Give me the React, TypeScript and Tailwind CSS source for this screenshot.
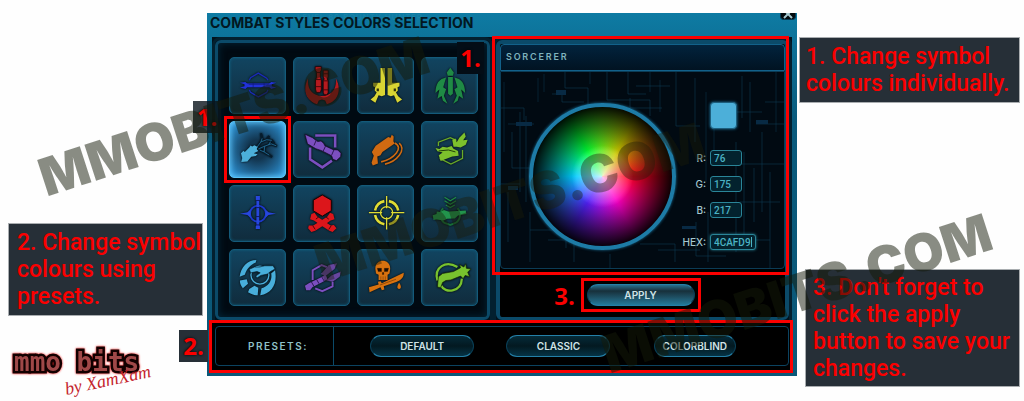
import React, { useState } from 'react';

const P = '#7c4fc0';
const G = '#1f8a45';

const styles = [
    {
        name: 'Sentinel', box: '12 21 171 171', art: (
            <g fill="#2232d8" stroke="#2232d8">
                <path d="M72 90 L76 82 L100 68 L126 84 L130 90 M72 120 L76 128 L100 142 L126 128 L130 120" fill="none" stroke="#1a2bb8" strokeWidth="4" />
                <path d="M62 100 H138 V112 H62 Z" stroke="none" />
                <path d="M43 98 L60 96 L66 101 V111 L60 117 L43 113 L57 109 V103 Z M156 98 L140 96 L134 101 V111 L140 117 L156 113 L142 109 V103 Z" stroke="none" />
                <path d="M70 103 H132 M84 98 V113 M118 98 V113" stroke="#101a70" strokeWidth="2" />
            </g>
        ),
    },
    {
        name: 'Marauder', box: '204 21 171 171', art: (
            <g fill="#b51a1f">
                <path d="M248 84 C230 116 240 154 276 165 L281 153 L291 150 L301 153 L306 165 C344 154 352 116 334 84 C338 116 322 139 291 139 C260 139 244 116 248 84 Z" />
                <path d="M270 48 H289 V58 L286 64 V82 L289 88 V118 L286 128 H273 L271 118 V88 L274 82 V64 L270 58 Z" stroke="#140203" strokeWidth="2" />
                <path d="M295 59 H310 V80 L307 86 L310 92 V128 L307 135 H298 L295 128 V92 L298 86 L295 80 Z" stroke="#140203" strokeWidth="2" />
                <path d="M273 66 H287 M272 88 H289 M272 110 H289 M295 70 H310 M295 92 H310 M295 120 H310" stroke="#4a0609" strokeWidth="3" />
            </g>
        ),
    },
    {
        name: 'Gunslinger', box: '6 21 171 171', art: (
            <g fill="#d8d433">
                <path d="M76 52 H90 V136 L80 140 L70 137 L60 160 L45 150 L57 140 L64 128 L58 122 L59 112 L53 109 V98 H76 Z" />
                <path d="M112 52 H98 V136 L108 140 L118 137 L128 160 L143 150 L131 140 L124 128 L130 122 L129 112 L135 109 V98 H112 Z" />
                <path d="M64 116 h7 v8 h-7 z M117 116 h7 v8 h-7 z" fill="#30300a" />
            </g>
        ),
    },
    {
        name: 'Powertech', box: '198 21 171 171', art: (
            <g fill={G}>
                <path d="M286 51 L297 66 L294 76 H278 L275 66 Z M279 80 H294 V132 L286 138 L279 132 Z" />
                <path d="M273 82 C252 86 240 100 240 130 L252 119 L246 148 L259 139 L263 154 L277 163 L266 138 L273 118 L264 112 Z" />
                <path d="M299 82 C320 86 332 100 332 130 L320 119 L326 148 L313 139 L309 154 L295 163 L306 138 L299 118 L308 112 Z" />
            </g>
        ),
    },
    {
        name: 'Sorcerer', box: '12 213 171 171', art: (
            <g>
                <path d="M96 291 L108 275 L112 264 L108 248 M108 275 L126 268 L134 256 M100 297 L120 288 L140 281 L158 288 M120 288 L118 306 L134 316 L143 322 M126 268 L142 270 L150 280 M118 306 L104 300 M132 284 L138 274" fill="none" stroke="#061c2c" strokeWidth="7" />
                <path d="M96 291 L108 275 L112 264 M108 275 L126 268 M100 297 L120 288 L140 281 L156 287 M120 288 L118 306 L134 316 M126 268 L142 270 M118 306 L104 300 M132 284 L138 274" fill="none" stroke="#2c86b8" strokeWidth="2" />
                <path d="M47 337 L50 325 L46 310 L54 302 L58 306 L72 292 L76 286 L81 289 L88 285 L98 291 L95 297 L100 303 L86 310 L98 313 L92 319 L78 321 L66 336 Z" fill="#4cafd9" />
            </g>
        ),
    },
    {
        name: 'Shadow', box: '204 213 171 171', art: (
            <g>
                <path d="M270 255 H332 V292 M254 292 V329 L292 354 L322 333" fill="none" stroke={P} strokeWidth="8" />
                <path d="M238 251 L262 262 L272 270 L278 274 L288 272 L296 279 L300 287 L326 299 L340 300 L350 310 L349 321 L336 333 L325 329 L321 318 L290 302 L272 296 L246 281 Z" fill={P} stroke="#140a26" strokeWidth="2" />
                <path d="M273 270 L266 286 M302 288 L295 303 M328 300 L321 316" stroke="#2b1650" strokeWidth="3" />
            </g>
        ),
    },
    {
        name: 'Operative', box: '6 213 171 171', art: (
            <g>
                <path d="M120 278 C150 292 118 328 78 337 M134 279 C158 300 126 336 90 344" fill="none" stroke="#d06a12" strokeWidth="5" />
                <path d="M61 287 L100 260 L107 262 L111 253 L117 258 L116 273 L120 280 L82 306 L76 316 L66 320 L68 342 L52 348 L48 340 L55 318 L49 306 Z" fill="#d06a12" />
            </g>
        ),
    },
    {
        name: 'Mercenary', box: '198 213 171 171', art: (
            <g>
                <path d="M249 288 V276 L286 262 L305 270 M253 326 L288 344 L324 326 V300" fill="none" stroke="#6aab28" strokeWidth="4" />
                <path d="M240 294 L252 297 L262 290 L276 292 L290 288 L296 296 L310 303 L312 318 L292 320 L256 334 L250 316 L262 308 L246 304 Z" fill="#7cc02c" />
                <path d="M296 290 L292 268 L302 264 L306 276 L314 262 L330 246 L334 258 L326 270 L340 268 L334 284 L318 292 L306 290 Z" fill="#7cc02c" />
                <path d="M250 303 L280 300 L302 306" stroke="#1f3a08" strokeWidth="3" fill="none" />
            </g>
        ),
    },
    {
        name: 'Guardian', box: '12 17 171 171', art: (
            <g fill="#2747dd">
                <circle cx="99" cy="103" r="25" fill="none" stroke="#1c38c8" strokeWidth="6" />
                <path d="M43 103 L66 99 L76 90 V116 L66 107 Z M155 103 L132 99 L122 90 V116 L132 107 Z" />
                <path d="M92 48 H105 V60 L103 64 V138 L105 142 V151 H92 V142 L94 138 V64 L92 60 Z" />
                <path d="M92 62 H106 M92 84 H106 M92 112 H106 M92 138 H106" stroke="#0c1a66" strokeWidth="3" />
            </g>
        ),
    },
    {
        name: 'Juggernaut', box: '204 17 171 171', art: (
            <g fill="#dc161b">
                <path d="M258 104 L268 100 L276 112 L318 140 L328 138 L336 148 L324 160 L314 156 L286 138 L266 124 L254 120 Z" />
                <path d="M326 104 L316 100 L308 112 L264 140 L250 140 L248 148 L258 160 L270 156 L298 138 L318 124 L330 120 Z" />
                <path d="M292 45 L320 61 V94 L292 111 L264 94 V61 Z" stroke="#160304" strokeWidth="3" />
                <path d="M272 120 L282 112 M302 112 L312 120 M262 140 L270 152 M320 140 L312 152" stroke="#4d0305" strokeWidth="3" />
            </g>
        ),
    },
    {
        name: 'Sniper', box: '6 17 171 171', art: (
            <g fill="none" stroke="#e0dc33">
                <path d="M102 64 A37 37 0 0 1 131 93 M131 107 A37 37 0 0 1 102 136 M88 136 A37 37 0 0 1 59 107 M59 93 A37 37 0 0 1 88 64" strokeWidth="8" />
                <circle cx="95" cy="100" r="19" strokeWidth="4" />
                <path d="M95 48 V86 M95 114 V152 M40 100 H81 M109 100 H150" strokeWidth="4" />
            </g>
        ),
    },
    {
        name: 'Commando', box: '198 17 171 171', art: (
            <g>
                <path d="M268 52 L286 63 L304 52 M268 63 L286 74 L304 63 M272 76 L286 84 L300 76" fill="none" stroke={G} strokeWidth="4" />
                <path d="M264 86 A30 30 0 0 0 268 132 L286 138 L302 132 A30 30 0 0 0 308 86" fill="none" stroke="#176b37" strokeWidth="6" />
                <path d="M231 108 L243 104 L244 96 L256 98 L266 92 L280 96 L334 93 L336 104 L310 109 L300 118 L276 119 L266 124 L244 121 L234 122 Z" fill="#22944c" />
            </g>
        ),
    },
    {
        name: 'Sage', box: '12 209 171 171', art: (
            <g fill="#48aedb">
                <path d="M94 240 C66 240 46 262 42 292 L58 286 C64 268 74 256 92 248 Z M43 304 L64 300 L68 314 L52 328 C46 320 42 312 43 304 Z M72 330 L88 320 L100 326 L98 350 C88 350 78 346 68 340 Z M152 272 C160 312 144 344 106 350 L110 328 C134 322 144 300 140 282 Z" />
                <circle cx="105" cy="287" r="28" fill="none" stroke="#48aedb" strokeWidth="4" />
                <path d="M72 269 L88 262 L104 262 L120 258 L146 258 L152 268 L138 276 L128 284 L108 288 L96 296 L92 290 L106 280 L96 276 L76 280 Z" stroke="#06202f" strokeWidth="2" />
            </g>
        ),
    },
    {
        name: 'Assassin', box: '204 209 171 171', art: (
            <g>
                <path d="M262 302 V272 L290 256 L306 262 M270 328 L292 337 L324 322 V308" fill="none" stroke={P} strokeWidth="6" />
                <path d="M238 320 L250 312 L292 292 L302 284 L308 300 L290 310 L262 324 L254 334 L242 334 Z" fill={P} />
                <path d="M288 284 L312 256 L338 250 L330 268 L302 290 Z M304 304 L320 288 L350 276 L346 292 L324 308 Z" fill="#6746a0" />
                <path d="M258 308 L266 322 M274 300 L282 314 M290 292 L298 306" stroke="#2b1650" strokeWidth="3" />
            </g>
        ),
    },
    {
        name: 'Scoundrel', box: '6 209 171 171', art: (
            <g fill="#d8720f">
                <path d="M60 268 C58 234 108 234 106 268 L104 282 L98 286 V302 H70 V286 L62 282 Z" />
                <path d="M40 325 L70 316 L68 308 L76 306 L80 312 L148 280 C150 296 134 306 120 310 L86 322 L88 332 L80 334 L76 325 L42 340 Z" />
                <path d="M134 311 C142 322 140 330 134 330 C126 330 127 320 134 311 Z" />
                <path d="M66 266 h13 v10 h-10 z M88 266 h13 l-3 10 h-10 z M82 279 h4 v6 h-4 z M77 291 v11 M84 291 v11 M91 291 v11" fill="#1c0d02" stroke="#1c0d02" strokeWidth="1" />
                <path d="M74 318 L124 300" stroke="#6a3504" strokeWidth="2" />
            </g>
        ),
    },
    {
        name: 'Vanguard', box: '198 209 171 171', art: (
            <g>
                <path d="M246 304 C234 262 272 240 308 262 M322 298 C320 342 268 344 258 320" fill="none" stroke="#78c22e" strokeWidth="7" />
                <path d="M249 292 L262 282 L296 276 L318 264 L314 254 L328 262 L334 252 L336 266 L350 268 L340 278 L346 292 L332 288 L326 298 L318 290 L288 302 L272 304 L262 310 L256 326 L246 324 Z" fill="#78c22e" stroke="#13240a" strokeWidth="2" />
            </g>
        ),
    },
];

const presets = [
    { name: 'Default', width: 'w-[104px]' },
    { name: 'Classic', width: 'w-[104px]' },
    { name: 'Colorblind', width: 'w-[82px]' },
];

const Frame = ({ className }: { className: string }) => (
    <div className={`pointer-events-none absolute z-10 border-3 border-[#fb0000] ${className}`} />
);

const Step = ({ n, className }: { n: number; className: string }) => (
    <span className={`absolute z-20 flex h-8 items-center justify-center font-['Open_Sans','Noto_Sans',sans-serif] text-2xl font-bold text-[#fb0000] [text-shadow:0_0_3px_#000] ${className}`}>
        {n}.
    </span>
);

const Callout = ({ children, className }: { children: React.ReactNode; className: string }) => (
    <p className={`bg-[#262f37] font-['Roboto','Noto_Sans',sans-serif] text-[23px] leading-[27px] font-medium whitespace-nowrap text-[#fb0000] outline-1 outline-[#a9adb0] ${className}`}>
        {children}
    </p>
);

const Watermark = ({ className }: { className: string }) => (
    <span aria-hidden className={`pointer-events-none absolute z-30 -rotate-18 font-['Inter',sans-serif] text-[52px] leading-[52px] font-black whitespace-nowrap ${className}`}>
        MMOBITS.COM
    </span>
);

const Pill = ({ children, className }: { children: React.ReactNode; className: string }) => (
    <button type="button" className={`h-[22px] rounded-full border border-[#093f57] border-t-[#2480a8] border-b-[#2480a8] text-[10px] font-semibold text-[#cfe3e6] uppercase ${className}`}>
        {children}
    </button>
);

const Field = ({ id, label, value, onChange, active }: { id: string; label: string; value: string; onChange: (v: string) => void; active?: boolean }) => (
    <div className="relative flex items-center gap-1">
        <label htmlFor={id} className="w-7 text-right text-[10px] leading-4 font-medium text-[#a5c8cf]">{label}:</label>
        <input
            id={id}
            value={value}
            onChange={(e) => onChange(e.target.value)}
            className={`h-4 rounded-[3px] border border-[#2a8598] bg-[#03222e] px-[3px] font-['Roboto',sans-serif] text-[10px] leading-3 font-medium text-[#4bb3c4] outline-none ${active ? 'w-[46px] shadow-[0_0_3px_#2a8598]' : 'w-8'}`}
        />
        {active && <span className="absolute right-1 h-2.5 w-px bg-[#4bb3c4]" />}
    </div>
);

const Circuit = () => (
    <svg aria-hidden className="absolute inset-0 h-full w-full" viewBox="0 0 285 196" preserveAspectRatio="xMidYMid slice" fill="none" stroke="#0d3850" strokeOpacity="0.6">
        <path d="M65 0 V16 H88 V34 M52 22 H62 V30 H84 M107 0 V28 H150 V44 M130 26 V36 H162 M128 0 V22 H146 M136 14 H170 M176 0 V54 H200 M0 36 H24 V48 M8 52 H34 M195 6 V70 M230 40 H262 M242 4 V46 M250 10 V60 M265 30 H285 M256 52 H285" />
        <path d="M20 40 V120 M26 44 V130 M12 60 V96 H32 M0 112 H20 M8 120 V170 M30 140 V190 M30 158 H66 V176 M48 168 H74 M74 150 V190 M110 182 V196 M140 172 H175 V190 M158 178 H200 M196 150 V184 H226 M208 140 V190 M236 70 V180 M244 80 V170 M254 96 V150 M262 60 V140 M270 100 V196 M228 92 H285 M240 130 H280 M222 168 H270" />
        <path d="M90 0 V12 M150 0 V20 M160 8 V40 M206 20 V110 M214 40 V90 M276 0 V60 M4 10 V80 M38 6 V30 M44 2 V20" strokeOpacity="0.5" />
        <path d="M56 18 h10 v5 h-10 z M16 50 h16 v4 h-16 z M228 44 h8 v5 h-8 z M256 48 h12 v4 h-12 z M182 154 h14 v3 h-14 z M8 114 h10 v4 h-10 z" fill="#082a44" stroke="none" />
    </svg>
);

const App: React.FC = () => {
    const [selected, setSelected] = useState('Sorcerer');
    const [color, setColor] = useState({ r: '76', g: '175', b: '217', hex: '4CAFD9' });

    return (
        <main className="relative grid grid-cols-[minmax(0,207fr)_minmax(0,590fr)_minmax(0,227fr)] items-start overflow-hidden bg-[#fefefe] pb-3 font-['Inter',sans-serif]">
            <aside className="pt-[224px] pl-[9px]">
                <Callout className="mr-[5px] py-[5px] pl-2">
                    2. Change symbol<br />colours using<br />presets.
                </Callout>
                <div className="relative mt-[31px] ml-[5px] h-12">
                    <span className="font-['DejaVu_Sans_Mono',monospace] text-[26px] leading-8 font-bold text-[#a04848] [-webkit-text-stroke:5px_#120000] [paint-order:stroke] [filter:drop-shadow(0_0_1px_#e00)]">mmo bits</span>
                    <span className="absolute top-6 left-[50px] -rotate-12 font-['Liberation_Serif',serif] text-lg leading-5 text-[#c4232c] italic">by XamXam</span>
                </div>
            </aside>

            <section className="mt-[13px] bg-linear-to-b from-[#0e7ba3] via-[#0a5a7c] via-30% to-[#0b5878] px-[5px] pb-1">
                <header className="relative h-6">
                    <span aria-hidden className="absolute top-0 left-[85px] text-[8px] leading-[8px] tracking-widest whitespace-nowrap text-[#1c83a8]">LEVEL 80 BOUNTY HUNTER</span>
                    <h1 className="relative -ml-0.5 pt-0.5 text-sm leading-4 font-bold whitespace-nowrap text-[#021721]">COMBAT STYLES COLORS SELECTION</h1>
                    <button type="button" aria-label="Close" className="absolute top-0 -right-1 flex h-[7px] w-4 items-end justify-center overflow-hidden rounded-b-sm border border-t-0 border-[#063a52] bg-[#02090d] text-[#a5c8cf]">
                        <svg viewBox="0 0 10 10" className="size-2.5 shrink-0" stroke="currentColor" strokeWidth="2"><path d="M1 1 L9 9 M9 1 L1 9" /></svg>
                    </button>
                </header>

                <div className="grid grid-cols-[281fr_299fr] bg-[#02121c]">
                    <div className="relative rounded-t-lg border-3 border-b-2 border-[#03202f]">
                        <div className="grid grid-cols-4 gap-[7px] rounded-md border-3 border-[#0b4a69] bg-[#000a12] pt-[14px] pr-[9px] pb-[11px] pl-[11px] shadow-[inset_0_0_8px_#03283c]">
                            {styles.map((s) => (
                                <div key={s.name} className="relative">
                                    <button
                                        type="button"
                                        aria-label={s.name}
                                        aria-pressed={selected === s.name}
                                        onClick={() => setSelected(s.name)}
                                        className={`block h-[57px] w-full rounded-[5px] border ${selected === s.name
                                            ? 'border-[#5cc4f5] bg-radial from-[#12354f] from-25% to-[#2f9fe8] shadow-[inset_0_0_6px_#6cd0ff]'
                                            : 'border-[#145a7a] bg-linear-to-b from-[#114460] to-[#102c3d] shadow-[inset_0_0_3px_#10607f]'}`}
                                    >
                                        <svg viewBox={s.box} className="h-full w-full [filter:drop-shadow(0_0_1px_#000)]">{s.art}</svg>
                                    </button>
                                    {s.name === 'Sorcerer' && (
                                        <>
                                            <Frame className="-inset-[5px]" />
                                            <Step n={1} className="-top-5 -left-9 w-7 bg-[#0a141b]/80" />
                                        </>
                                    )}
                                </div>
                            ))}
                        </div>
                        <Step n={1} className="top-0.5 right-1.5 w-[27px] bg-[#030d16]" />
                    </div>

                    <div className="rounded-t-lg border-3 border-b-2 border-[#03202f]">
                        <div className="flex h-full flex-col rounded-md border-4 border-b-3 border-[#0b4a69] bg-black">
                            <div className="relative">
                                <h2 className="h-[27px] rounded-t border border-[#12618a] bg-linear-to-b from-[#02233d] to-[#011322] pl-[5px] text-[9px] leading-6 font-semibold tracking-[0.2em] text-[#7fb3bd]">{selected.toUpperCase()}</h2>
                                <div className="relative flex h-[198px] justify-between rounded-b border border-[#0b3c56] bg-[#010a12] pr-[28px] pl-[28px]">
                                    <Circuit />
                                    <div className="relative mt-[31px] size-[147px] rounded-full border-4 border-[#1d7ba6] bg-[radial-gradient(closest-side,#fffc_0%,transparent_42%),radial-gradient(closest-side,transparent_35%,#000_98%),conic-gradient(from_90deg,#f02,#f0c,#52f,#0cf,#0f3,#cc0,#f02)] bg-origin-border shadow-[0_0_3px_#1d7ba6]" />
                                    <div className="relative flex flex-col gap-2.5 pt-[30px]">
                                        <div className="mb-[11px] ml-8 size-[27px] rounded-sm border border-[#1d5d7c] bg-[#4cafd9] shadow-[0_0_3px_#1d7ba6]" />
                                        <Field id="red" label="R" value={color.r} onChange={(r) => setColor({ ...color, r })} />
                                        <Field id="green" label="G" value={color.g} onChange={(g) => setColor({ ...color, g })} />
                                        <Field id="blue" label="B" value={color.b} onChange={(b) => setColor({ ...color, b })} />
                                        <div className="mt-1.5">
                                            <Field id="hex" label="HEX" active value={color.hex} onChange={(hex) => setColor({ ...color, hex })} />
                                        </div>
                                    </div>
                                </div>
                                <Frame className="-top-2 -right-1 -bottom-1.5 -left-2" />
                            </div>
                            <div className="flex flex-1 items-center justify-center pt-1 pr-1">
                                <div className="relative">
                                    <Pill className="block w-[108px] bg-linear-to-b from-[#27718f] via-[#17303b] via-30% to-[#237a9a]">Apply</Pill>
                                    <Frame className="-inset-1.5" />
                                    <Step n={3} className="-top-1 -left-9 w-7" />
                                </div>
                            </div>
                        </div>
                    </div>
                </div>

                <div className="relative bg-black px-[3px] pt-1 pb-1.5">
                    <div className="flex h-10 items-center rounded border border-[#0b4360]">
                        <h2 className="w-[118px] self-stretch border-r border-[#0b4a69] pl-8 text-[10px] leading-[38px] font-semibold tracking-[0.15em] text-[#8fc0c8]">PRESETS:</h2>
                        <div className="grid flex-1 grid-cols-3 items-center justify-items-center pr-[25px] pl-5">
                            {presets.map((p) => (
                                <Pill key={p.name} className={`${p.width} bg-linear-to-b from-[#052b39] via-[#031921] to-[#053345]`}>{p.name}</Pill>
                            ))}
                        </div>
                    </div>
                    <Frame className="-top-0.5 -right-px -bottom-px -left-[3px]" />
                    <Step n={2} className="top-2 -left-[33px] w-[29px] bg-[#262f37]" />
                </div>
            </section>

            <aside className="pt-[38px] pr-[5px] pl-[3px]">
                <Callout className="py-[5px] pl-1.5">
                    1. Change symbol<br />colours individually.
                </Callout>
                <Callout className="mt-[168px] ml-1.5 py-1 pl-[7px]">
                    3. Don't forget to<br />click the apply<br />button to save your<br />changes.
                </Callout>
            </aside>

            <Watermark className="top-[91px] left-[3%] text-[#141a08]/50" />
            <Watermark className="top-[177px] left-[30%] text-[#1c1c08]/40" />
            <Watermark className="top-[268px] left-[58%] text-[#141a08]/50" />
        </main>
    );
};

export default App;
